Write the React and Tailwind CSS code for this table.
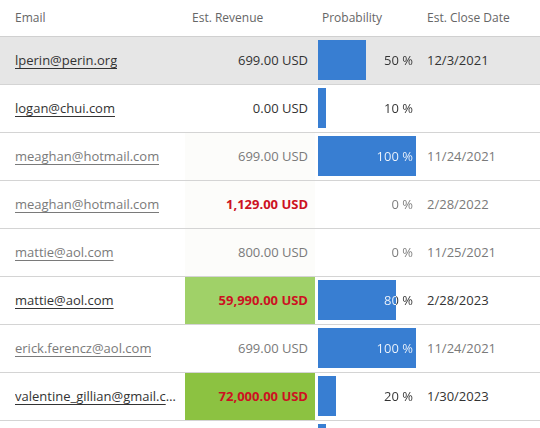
import React from "react";

const rows = [
  { email: "lperin@perin.org", rev: "699.00 USD", p: 50, date: "12/3/2021", dark: true, sel: true },
  { email: "logan@chui.com", rev: "0.00 USD", p: 10, date: "", dark: true },
  { email: "meaghan@hotmail.com", rev: "699.00 USD", p: 100, date: "11/24/2021", dark: false, tint: true },
  { email: "meaghan@hotmail.com", rev: "1,129.00 USD", p: 0, date: "2/28/2022", dark: false, tint: true, red: true },
  { email: "mattie@aol.com", rev: "800.00 USD", p: 0, date: "11/25/2021", dark: false, tint: true },
  { email: "mattie@aol.com", rev: "59,990.00 USD", p: 80, date: "2/28/2023", dark: true, red: true, green: "light" },
  { email: "erick.ferencz@aol.com", rev: "699.00 USD", p: 100, date: "11/24/2021", dark: false },
  { email: "valentine_gillian@gmail.com", rev: "72,000.00 USD", p: 20, date: "1/30/2023", dark: true, red: true, green: "dark" },
  { email: "kim@example.com", rev: "0.00 USD", p: 10, date: "", dark: true },
];

function Row({ r }) {
  const txt = r.dark ? "text-[#333333]" : "text-[#7a7a7a]";
  const col = r.dark ? "#333333" : "#7a7a7a";
  const revBg =
    r.green === "light" ? "bg-[#a0d168]" : r.green === "dark" ? "bg-[#8cc241]" : r.tint ? "bg-[#fcfcfa]" : "";
  const revTxt = r.red ? "text-[#cc1122] font-bold" : txt;
  const barW = r.p > 0 ? r.p - 2 : 0;
  const edge = 3 + barW;
  const grad = {
    backgroundImage: `linear-gradient(to right, #f2f6fc 0px, #f2f6fc ${edge}px, ${col} ${edge}px, ${col} 100%)`,
    WebkitBackgroundClip: "text",
    backgroundClip: "text",
    color: "transparent",
  };
  return (
    <div className={`flex h-[48px] border-b border-[#d4d4d4] ${r.sel ? "bg-[#e6e6e6]" : "bg-white"}`}>
      <div className="w-[185px] shrink-0 pl-[15px] pr-[7px] flex items-center min-w-0">
        <span className={`truncate underline underline-offset-[3px] decoration-1 ${txt}`}>{r.email}</span>
      </div>
      <div className={`w-[130px] shrink-0 px-[7px] flex items-center justify-end ${revBg} ${revTxt}`}>
        {r.rev}
      </div>
      <div className="relative w-[105px] shrink-0 flex items-center">
        {barW > 0 && (
          <div
            className="absolute left-[3px] top-[3px] bottom-[4px] bg-[#387ed2]"
            style={{ width: barW + "px" }}
          />
        )}
        <div className="relative w-full pr-[7px] text-right" style={grad}>
          {r.p} %
        </div>
      </div>
      <div className={`flex-1 pl-[7px] flex items-center ${txt}`}>{r.date}</div>
    </div>
  );
}

export default function App() {
  return (
    <div
      className="w-[540px] h-[428px] overflow-hidden bg-white text-[13px]"
      style={{ fontFamily: '"Open Sans", "Noto Sans", sans-serif' }}
    >
      <div className="flex h-[37px] border-b border-[#d0d0d0] text-[12px] text-[#666666]">
        <div className="w-[185px] pl-[15px] flex items-center">Email</div>
        <div className="w-[130px] pl-[7px] flex items-center">Est. Revenue</div>
        <div className="w-[105px] pl-[7px] flex items-center">Probability</div>
        <div className="flex-1 pl-[7px] flex items-center">Est. Close Date</div>
      </div>
      {rows.map((r, i) => (
        <Row key={i} r={r} />
      ))}
    </div>
  );
}
